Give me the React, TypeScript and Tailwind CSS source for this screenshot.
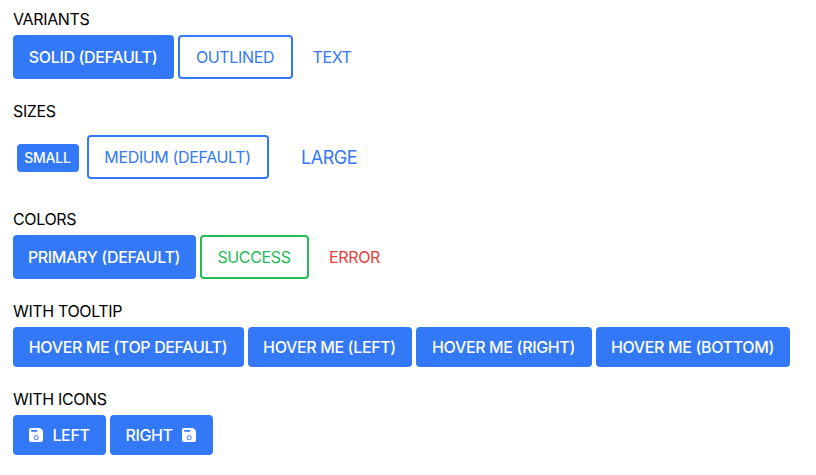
import React from 'react';

type Tone = 'primary' | 'success' | 'error';
type Variant = 'solid' | 'outlined' | 'text';

const tones: Record<Variant, Record<Tone, string>> = {
  solid: {
    primary: 'bg-[#3378f6] text-white font-medium',
    success: 'bg-[#22bb55] text-white font-medium',
    error: 'bg-[#eb3b3b] text-white font-medium',
  },
  outlined: {
    primary: 'border-2 border-[#3378f6] text-[#3378f6]',
    success: 'border-2 border-[#22bb55] text-[#22bb55]',
    error: 'border-2 border-[#eb3b3b] text-[#eb3b3b]',
  },
  text: {
    primary: 'text-[#3378f6]',
    success: 'text-[#22bb55]',
    error: 'text-[#eb3b3b]',
  },
};

function SaveIcon() {
  return (
    <svg viewBox="0 0 16 16" className="size-4 shrink-0" aria-hidden="true">
      <path fill="currentColor" fillRule="evenodd" d="M3 1h8.3c.6 0 1.1.2 1.5.6l1.5 1.5c.4.4.7 1 .7 1.6V13a2 2 0 0 1-2 2H3a2 2 0 0 1-2-2V3a2 2 0 0 1 2-2Zm.2 2.1v1.6h6V3.1Z" />
      <circle cx="8.2" cy="10.7" r="2.1" fill="none" stroke="#3378f6" strokeWidth="1" />
    </svg>
  );
}

interface ButtonProps {
  children: React.ReactNode;
  className: string;
  variant?: Variant;
  tone?: Tone;
}

function Button({ children, className, variant = 'solid', tone = 'primary' }: ButtonProps) {
  return (
    <button type="button" className={`flex shrink-0 items-center justify-center whitespace-nowrap rounded pr-px ${tones[variant][tone]} ${className}`}>
      {children}
    </button>
  );
}

function Group({ title, children }: { title: string; children: React.ReactNode }) {
  return (
    <section className="flex flex-col gap-1">
      <h2>{title}</h2>
      <div className="flex items-center gap-1">{children}</div>
    </section>
  );
}

export default function App() {
  return (
    <main className="flex h-[475px] flex-col gap-5 overflow-hidden bg-white px-[13px] pt-[7px] font-['Inter',sans-serif] text-base leading-6 tracking-[-0.36px] text-black">
      <Group title="VARIANTS">
        <Button className="h-11 w-[161px]">SOLID (DEFAULT)</Button>
        <Button variant="outlined" className="h-11 w-[115px]">OUTLINED</Button>
        <Button variant="text" className="h-11 w-[71px]">TEXT</Button>
      </Group>
      <Group title="SIZES">
        <Button className="mx-1 mt-0.5 h-7 w-[62px] text-sm tracking-[-0.2px]">SMALL</Button>
        <Button variant="outlined" className="h-11 w-[182px]">MEDIUM (DEFAULT)</Button>
        <Button variant="text" className="h-[60px] w-[113px] pt-0.5 text-lg tracking-[-0.5px]">LARGE</Button>
      </Group>
      <Group title="COLORS">
        <Button className="h-11 w-[183px]">PRIMARY (DEFAULT)</Button>
        <Button variant="outlined" tone="success" className="h-11 w-[109px]">SUCCESS</Button>
        <Button variant="text" tone="error" className="h-11 w-[84px]">ERROR</Button>
      </Group>
      <Group title="WITH TOOLTIP">
        <Button className="h-10 w-[231px]">HOVER ME (TOP DEFAULT)</Button>
        <Button className="h-10 w-[164px]">HOVER ME (LEFT)</Button>
        <Button className="h-10 w-[176px]">HOVER ME (RIGHT)</Button>
        <Button className="h-10 w-[194px]">HOVER ME (BOTTOM)</Button>
      </Group>
      <Group title="WITH ICONS">
        <Button className="h-10 w-[93px] gap-2"><SaveIcon />LEFT</Button>
        <Button className="h-10 w-[103px] gap-2">RIGHT<SaveIcon /></Button>
      </Group>
    </main>
  );
}
